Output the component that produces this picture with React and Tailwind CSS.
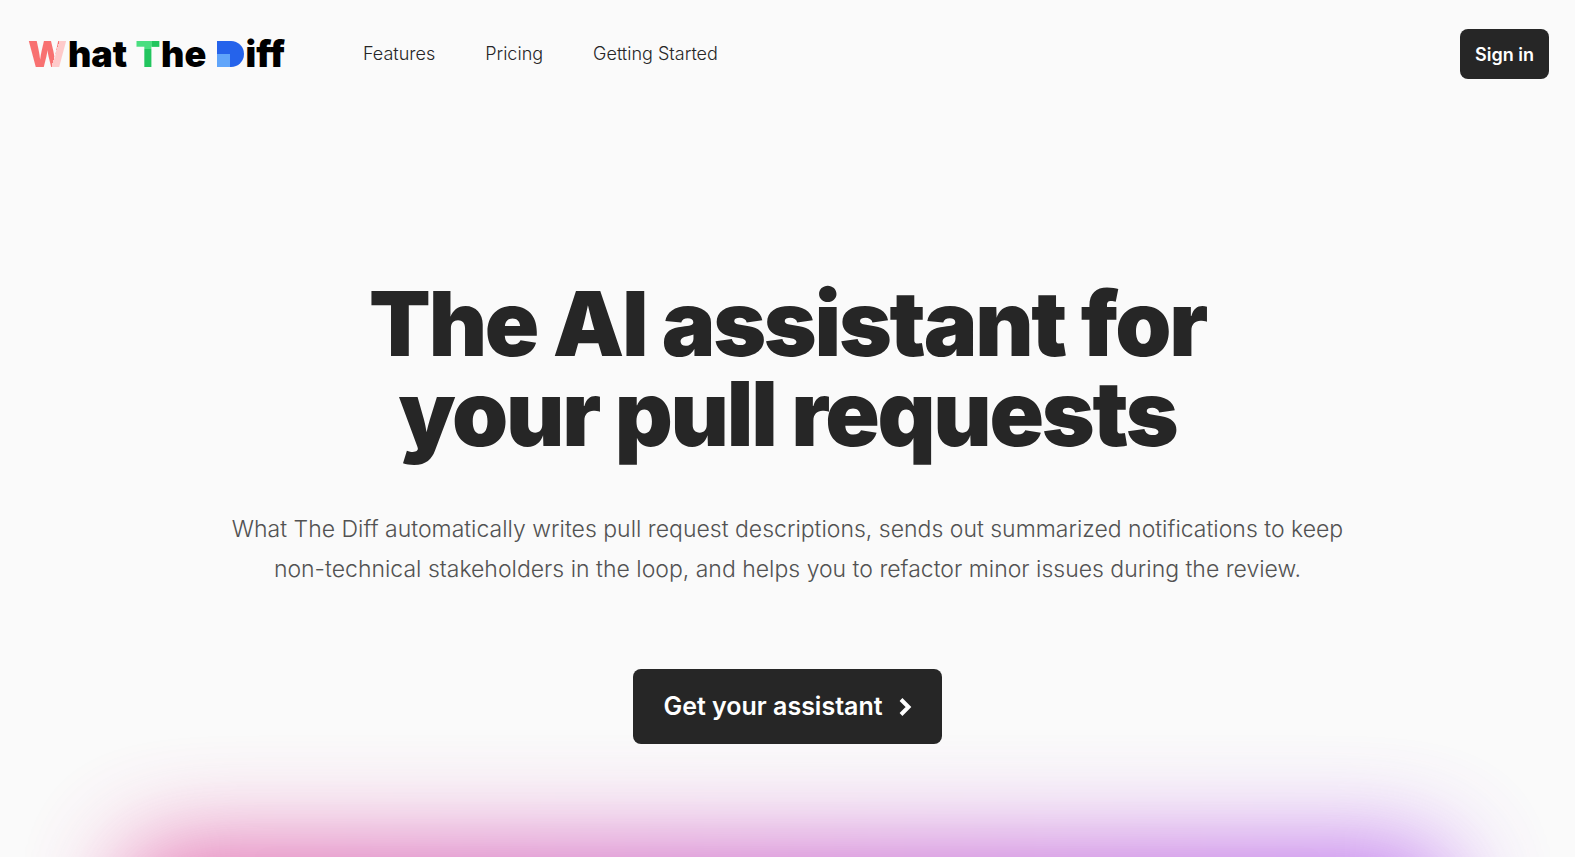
const navLinks = ['Features', 'Pricing', 'Getting Started'];

function Logo() {
  return (
    <a href="#" className="flex items-center gap-px text-[36px] leading-[44px] font-black text-black whitespace-pre">
      <span className="bg-[linear-gradient(107deg,#f87171_65%,#fecaca_65%)] bg-clip-text text-transparent">W</span>
      <span>hat </span>
      <span className="bg-[linear-gradient(to_right,transparent_68%,#22c55e_68%),linear-gradient(#4ade80_39%,#22c55e_39%)] bg-clip-text text-transparent">T</span>
      <span>he </span>
      <span className="mr-px ml-[3px] h-[26px] rounded-r-full bg-[#2563eb] bg-[linear-gradient(#60a5fa,#60a5fa)] bg-size-[50%_50%] bg-bottom-left bg-no-repeat leading-[26px] text-transparent">D</span>
      <span>iff</span>
    </a>
  );
}

export default function App() {
  return (
    <div className="flex h-screen flex-col overflow-hidden bg-neutral-50 font-['Inter',sans-serif] text-neutral-800">
      <header className="flex items-center pt-[29px] pr-[26px] pl-7">
        <Logo />
        <nav className="ml-[78px] flex flex-1 gap-[50px] text-[18px] leading-7 font-light text-neutral-800">
          {navLinks.map((label) => (
            <a key={label} href="#">{label}</a>
          ))}
        </nav>
        <button type="button" className="h-[50px] rounded-lg bg-neutral-800 px-[15px] text-[18px] font-semibold text-white">
          Sign in
        </button>
      </header>

      <main className="mt-[200px] flex flex-1 flex-col items-center text-center">
        <h1 className="text-[90px] leading-[90px] font-black tracking-tight">
          The AI assistant for
          <br />
          your pull requests
        </h1>
        <p className="mt-[50px] max-w-[1120px] text-[23px] leading-10 font-light text-neutral-600">
          What The Diff automatically writes pull request descriptions, sends out summarized notifications to keep
          non-technical stakeholders in the loop, and helps you to refactor minor issues during the review.
        </p>
        <button type="button" className="relative z-10 mt-[80px] flex h-[75px] items-center gap-4 rounded-lg bg-neutral-800 px-[30px] text-[25px] font-semibold text-white">
          Get your assistant
          <svg viewBox="0 0 13 18" className="h-[18px] w-[13px]" fill="none" stroke="currentColor" strokeWidth="4" aria-hidden="true">
            <path d="M2 1.5 9.5 9 2 16.5" />
          </svg>
        </button>
        <div className="mt-[102px] h-[400px] w-full shrink-0 px-[125px]">
          <div className="h-full rounded-[40px] bg-linear-to-r/srgb from-[#de3a90] to-[#a542ee] opacity-75 blur-[50px]" />
        </div>
      </main>
    </div>
  );
}
